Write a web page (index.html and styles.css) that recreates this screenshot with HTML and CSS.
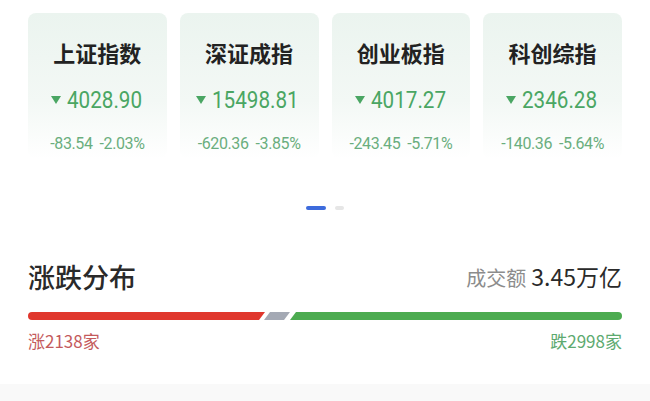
FILE: index.html
```html
<!DOCTYPE html>
<html lang="zh-CN">
<head>
  <meta charset="UTF-8" />
  <meta name="viewport" content="width=device-width, initial-scale=1.0" />
  <title>行情</title>
  <link rel="stylesheet" href="styles.css">
</head>
<body>
  <div class="indexes">
    <div class="card">
      <div class="name">上证指数</div>
      <div class="price"><span class="arrow"></span><span class="num">4028.90</span></div>
      <div class="change"><span>-83.54</span><span>-2.03%</span></div>
    </div>
    <div class="card">
      <div class="name">深证成指</div>
      <div class="price"><span class="arrow"></span><span class="num">15498.81</span></div>
      <div class="change"><span>-620.36</span><span>-3.85%</span></div>
    </div>
    <div class="card">
      <div class="name">创业板指</div>
      <div class="price"><span class="arrow"></span><span class="num">4017.27</span></div>
      <div class="change"><span>-243.45</span><span>-5.71%</span></div>
    </div>
    <div class="card">
      <div class="name">科创综指</div>
      <div class="price"><span class="arrow"></span><span class="num">2346.28</span></div>
      <div class="change"><span>-140.36</span><span>-5.64%</span></div>
    </div>
  </div>

  <div class="pager">
    <span class="active"></span>
    <span></span>
  </div>

  <div class="section">
    <div class="section-head">
      <h2>涨跌分布</h2>
      <div class="volume"><span class="label">成交额</span> 3.45万亿</div>
    </div>
    <div class="bar">
      <div class="up"></div>
      <div class="flat"></div>
      <div class="down"></div>
    </div>
    <div class="counts">
      <span class="up-count">涨2138家</span>
      <span class="down-count">跌2998家</span>
    </div>
  </div>

  <div class="footer-band">
    <div class="line"></div>
  </div>
</body>
</html>
```

FILE: styles.css
```css
body {
  margin: 0;
  padding: 0;
  background: #fff;
  font-family: "Noto Sans CJK SC", "Noto Sans", sans-serif;
  color: #222;
  overflow: hidden;
}

.indexes {
  display: grid;
  grid-template-columns: repeat(4, 1fr);
  gap: 13px;
  padding: 13px 28px 0;
}

.card {
  height: 146px;
  border-radius: 8px;
  background: linear-gradient(to bottom, #ebf4ef 0%, #f3f8f5 60%, #fff 100%);
  text-align: center;
}

.name {
  padding-top: 24px;
  font-size: 22px;
  line-height: 30px;
  font-weight: 700;
  color: #222;
}

.price {
  margin-top: 19px;
  display: flex;
  align-items: center;
  justify-content: center;
  gap: 6px;
  font-family: Roboto, sans-serif;
  font-size: 24px;
  line-height: 28px;
  color: #4aa663;
}

/* digits are drawn narrow, like a condensed DIN face */
.price .num {
  display: inline-block;
  transform: scaleX(0.86);
  transform-origin: left center;
  margin-right: -11px;
}

.arrow {
  width: 0;
  height: 0;
  border-left: 5px solid transparent;
  border-right: 5px solid transparent;
  border-top: 8px solid #4aa663;
}

.change {
  margin-top: 21px;
  display: flex;
  justify-content: center;
  gap: 7px;
  font-family: Roboto, sans-serif;
  font-size: 16px;
  line-height: 18px;
  color: #6aae7e;
  letter-spacing: -0.4px;
}

.pager {
  display: flex;
  justify-content: center;
  gap: 9px;
  margin-top: 47px;
}

.pager span {
  width: 9px;
  height: 4px;
  border-radius: 2px;
  background: #e6e6e6;
}

.pager span.active {
  width: 20px;
  background: #3d6bdc;
}

.section {
  padding: 50px 28px 0;
}

.section-head {
  display: flex;
  justify-content: space-between;
  align-items: center;
}

.section-head h2 {
  margin: 0;
  font-size: 27px;
  line-height: 34px;
  font-weight: 500;
  color: #2a2a2a;
}

.volume {
  font-size: 23px;
  line-height: 30px;
  color: #2a2a2a;
}

.volume .label {
  font-size: 20px;
  color: #8c8c8c;
}

.bar {
  display: flex;
  height: 8px;
  margin-top: 18px;
  border-radius: 4px;
  overflow: hidden;
}

.bar .up {
  width: 237px;
  background: #e0372d;
  clip-path: polygon(0 0, 100% 0, calc(100% - 6px) 100%, 0 100%);
}

.bar .flat {
  width: 26px;
  margin-left: -1px;
  background: #a4a9b4;
  clip-path: polygon(6px 0, 100% 0, calc(100% - 6px) 100%, 0 100%);
}

.bar .down {
  flex: 1;
  background: #4cab50;
  clip-path: polygon(6px 0, 100% 0, 100% 100%, 0 100%);
}

.counts {
  display: flex;
  justify-content: space-between;
  margin-top: 10px;
  font-size: 17px;
  line-height: 22px;
}

.up-count {
  color: #c45a5c;
}

.down-count {
  color: #5daa70;
}

.footer-band {
  margin-top: 32px;
  height: 18px;
  background: #f9f9f9;
  position: relative;
}

.footer-band .line {
  position: absolute;
  left: 22px;
  right: 150px;
  bottom: 0;
  height: 1px;
  background: #f1f1f1;
}
```
